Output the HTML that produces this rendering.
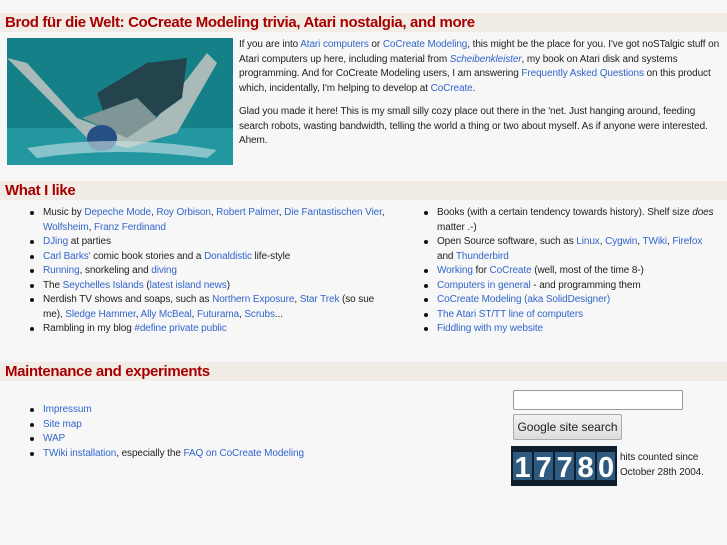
<!DOCTYPE html>
<html><head><meta charset="utf-8">
<style>
html,body{margin:0;padding:0;background:#f7f7f7;width:727px;height:545px;overflow:hidden}
body{font-family:"Liberation Sans",sans-serif;font-size:10px;color:#222;line-height:14.5px;position:relative;letter-spacing:-0.1px}
a{color:#3366cc;text-decoration:none}
.bar{position:absolute;left:0;width:727px;height:19px;background:#f1ece6;color:#a80000;font-weight:bold;font-size:15px;line-height:19px;padding-left:5px;box-sizing:border-box;letter-spacing:-0.35px}
.abs{position:absolute}
ul{margin:0;padding:0;list-style:none}
li{position:relative;padding-left:13px}
li:before{content:"";position:absolute;left:0;top:5px;width:4px;height:4px;border-radius:2px;background:#111}
p{margin:0}
</style></head><body>
<div class="bar" style="top:13px">Brod für die Welt: CoCreate Modeling trivia, Atari nostalgia, and more</div>
<svg class="abs" style="left:7px;top:38px" width="226" height="127" viewBox="0 0 226 127">
<rect width="226" height="127" fill="#168088"/>
<rect y="90" width="226" height="37" fill="#2397a0"/>
<path d="M0 20 L20 25 L70 80 L110 95 L150 80 L200 15 L210 25 L170 95 L120 110 L80 100 Z" fill="#a9bbb8"/>
<path d="M90 55 L140 25 L180 20 L175 60 L140 85 L100 85 Z" fill="#24444d"/>
<path d="M75 80 L130 60 L150 80 L120 100 Z" fill="#7f9696"/>
<ellipse cx="95" cy="100" rx="15" ry="13" fill="#264f86"/>
<path d="M20 110 Q110 95 210 112 L200 120 Q110 108 30 120Z" fill="#cde3e6" opacity=".6"/>
</svg>
<div class="abs" style="left:239px;top:38px;width:484px">
<p>If you are into <a>Atari computers</a> or <a>CoCreate Modeling</a>, this might be the place for you. I've got noSTalgic stuff on Atari computers up here, including material from <a><i>Scheibenkleister</i></a>, my book on Atari disk and systems programming. And for CoCreate Modeling users, I am answering <a>Frequently Asked Questions</a> on this product which, incidentally, I'm helping to develop at <a>CoCreate</a>.</p>
<p style="margin-top:9px">Glad you made it here! This is my small silly cozy place out there in the 'net. Just hanging around, feeding search robots, wasting bandwidth, telling the world a thing or two about myself. As if anyone were interested. Ahem.</p>
</div>
<div class="bar" style="top:181px">What I like</div>
<ul class="abs" style="left:30px;top:206px;width:365px">
<li>Music by <a>Depeche Mode</a>, <a>Roy Orbison</a>, <a>Robert Palmer</a>, <a>Die Fantastischen Vier</a>, <a>Wolfsheim</a>, <a>Franz Ferdinand</a></li>
<li><a>DJing</a> at parties</li>
<li><a>Carl Barks'</a> comic book stories and a <a>Donaldistic</a> life-style</li>
<li><a>Running</a>, snorkeling and <a>diving</a></li>
<li>The <a>Seychelles Islands</a> (<a>latest island news</a>)</li>
<li>Nerdish TV shows and soaps, such as <a>Northern Exposure</a>, <a>Star Trek</a> (so sue me), <a>Sledge Hammer</a>, <a>Ally McBeal</a>, <a>Futurama</a>, <a>Scrubs</a>...</li>
<li>Rambling in my blog <a>#define private public</a></li>
</ul>
<ul class="abs" style="left:424px;top:206px;width:290px">
<li>Books (with a certain tendency towards history). Shelf size <i>does</i> matter .-)</li>
<li>Open Source software, such as <a>Linux</a>, <a>Cygwin</a>, <a>TWiki</a>, <a>Firefox</a><br>and <a>Thunderbird</a></li>
<li><a>Working</a> for <a>CoCreate</a> (well, most of the time 8-)</li>
<li><a>Computers in general</a> - and programming them</li>
<li><a>CoCreate Modeling (aka SolidDesigner)</a></li>
<li><a>The Atari ST/TT line of computers</a></li>
<li><a>Fiddling with my website</a></li>
</ul>
<div class="bar" style="top:362px">Maintenance and experiments</div>
<ul class="abs" style="left:30px;top:403px;width:400px">
<li><a>Impressum</a></li>
<li><a>Site map</a></li>
<li><a>WAP</a></li>
<li><a>TWiki installation</a>, especially the <a>FAQ on CoCreate Modeling</a></li>
</ul>
<div class="abs" style="left:513px;top:390px;width:168px;height:18px;border:1px solid #999;border-radius:2px;background:#fff"></div>
<div class="abs" style="left:513px;top:414px;width:107px;height:24px;border:1px solid #aaa;border-radius:2px;background:linear-gradient(#f2f2f2,#dcdcdc);font-size:12px;line-height:24px;text-align:center;color:#222;letter-spacing:0">Google site search</div>
<svg class="abs" style="left:511px;top:446px" width="106" height="40" viewBox="0 0 106 40">
<rect width="106" height="40" fill="#0e1e2c"/>
<g fill="#2f5a80"><rect x="2" y="6" width="19" height="28"/><rect x="23" y="6" width="19" height="28"/><rect x="44" y="6" width="19" height="28"/><rect x="65" y="6" width="19" height="28"/><rect x="86" y="6" width="18" height="28"/></g>
<g font-family="Liberation Sans,sans-serif" font-weight="bold" font-size="29" fill="#fff" text-anchor="middle"><text x="11.5" y="31">1</text><text x="32.5" y="31">7</text><text x="53.5" y="31">7</text><text x="74.5" y="31">8</text><text x="95" y="31">0</text></g>
</svg>
<div class="abs" style="left:620px;top:451px;width:110px">hits counted since<br>October 28th 2004.</div>
</body></html>
